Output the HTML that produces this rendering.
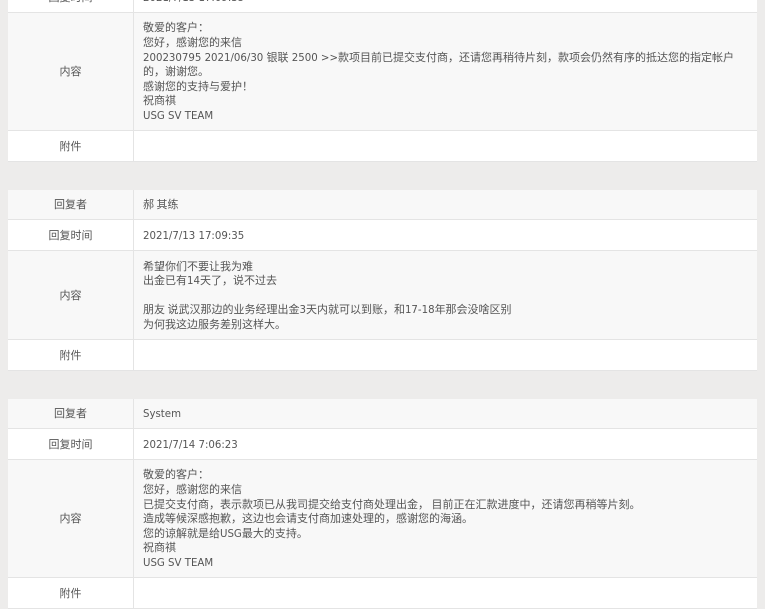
<!DOCTYPE html>
<html><head><meta charset="utf-8"><style>
body{margin:0;width:765px;height:600px;overflow:hidden;background:#edeceb;font-family:"Noto Sans CJK SC",sans-serif;font-size:11px;color:#555;position:relative}
.r{position:absolute;left:8px;width:749px;border-bottom:1px solid #e4e4e4;box-sizing:border-box;display:flex}
.g{background:#f8f8f8}.w{background:#fff}
.l{width:125px;border-right:1px solid #e4e4e4;display:flex;align-items:center;justify-content:center;flex:none;line-height:14.6px}
.c{padding-left:9px;display:flex;align-items:center;line-height:14.6px;white-space:nowrap}
i{font-style:normal;font-family:"DejaVu Sans",sans-serif;font-size:10.2px;line-height:0}
</style></head><body>
<div class="r w" style="top:-18px;height:31px"><div class="l">回复时间</div><div class="c"><div><i>2021/7/13 17:09:35</i></div></div></div>
<div class="r g" style="top:13px;height:118px"><div class="l">内容</div><div class="c"><div>敬爱的客户：<br>您好，感谢您的来信<br><i>200230795 2021/06/30 </i>银联<i> 2500 &gt;&gt;</i>款项目前已提交支付商，还请您再稍待片刻，款项会仍然有序的抵达您的指定帐户<br>的，谢谢您。<br>感谢您的支持与爱护！<br>祝商祺<br><i>USG SV TEAM</i></div></div></div>
<div class="r w" style="top:131px;height:31px"><div class="l">附件</div><div class="c"></div></div>

<div class="r g" style="top:190px;height:30px"><div class="l">回复者</div><div class="c"><div>郝 其练</div></div></div>
<div class="r w" style="top:220px;height:31px"><div class="l">回复时间</div><div class="c"><div><i>2021/7/13 17:09:35</i></div></div></div>
<div class="r g" style="top:251px;height:89px"><div class="l">内容</div><div class="c"><div>希望你们不要让我为难<br>出金已有<i>14</i>天了，说不过去<br><br>朋友 说武汉那边的业务经理出金<i>3</i>天内就可以到账，和<i>17-18</i>年那会没啥区别<br>为何我这边服务差别这样大。</div></div></div>
<div class="r w" style="top:340px;height:31px"><div class="l">附件</div><div class="c"></div></div>

<div class="r g" style="top:399px;height:30px"><div class="l">回复者</div><div class="c"><div><i>System</i></div></div></div>
<div class="r w" style="top:429px;height:31px"><div class="l">回复时间</div><div class="c"><div><i>2021/7/14 7:06:23</i></div></div></div>
<div class="r g" style="top:460px;height:118px"><div class="l">内容</div><div class="c"><div>敬爱的客户：<br>您好，感谢您的来信<br>已提交支付商，表示款项已从我司提交给支付商处理出金， 目前正在汇款进度中，还请您再稍等片刻。<br>造成等候深感抱歉，这边也会请支付商加速处理的，感谢您的海涵。<br>您的谅解就是给<i>USG</i>最大的支持。<br>祝商祺<br><i>USG SV TEAM</i></div></div></div>
<div class="r w" style="top:578px;height:31px"><div class="l">附件</div><div class="c"></div></div>
</body></html>
